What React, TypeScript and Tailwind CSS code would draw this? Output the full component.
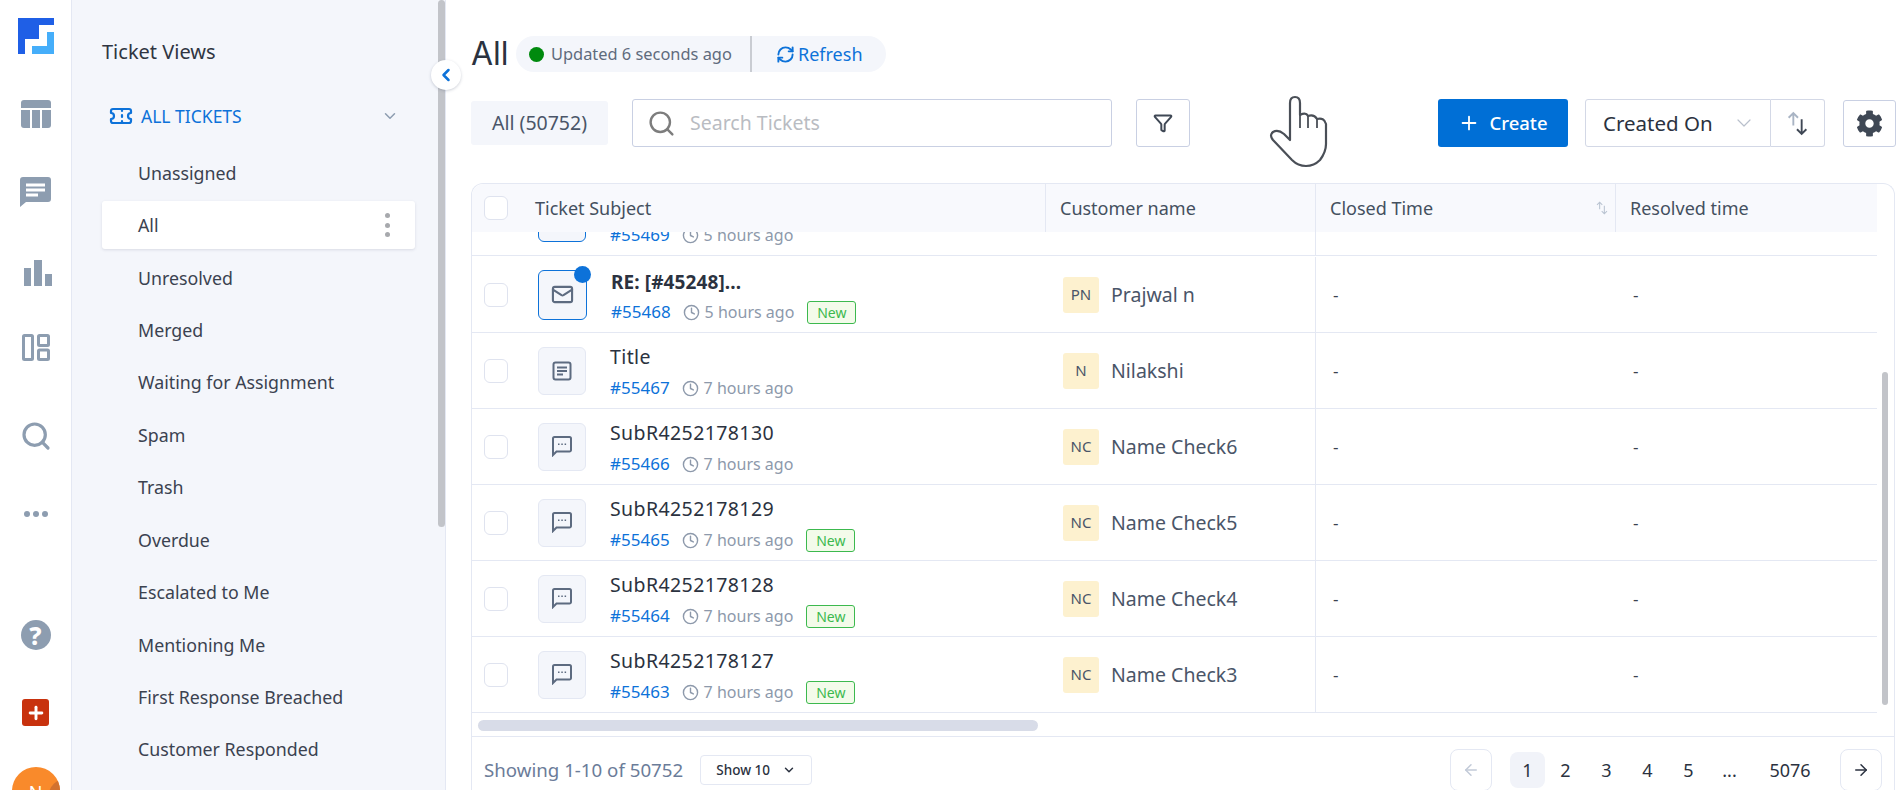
import { ArrowLeft, ArrowRight, ChevronDown, ChevronLeft, Clock, Funnel, Mail, Plus, RefreshCw, Search, Ticket } from "lucide-react";
import { FaCog } from "react-icons/fa";

interface Row {
  id: string;
  title: string;
  age: string;
  isNew?: boolean;
  initials: string;
  name: string;
  kind: "chat" | "doc" | "mail";
}

const views = [
  "Unassigned",
  "All",
  "Unresolved",
  "Merged",
  "Waiting for Assignment",
  "Spam",
  "Trash",
  "Overdue",
  "Escalated to Me",
  "Mentioning Me",
  "First Response Breached",
  "Customer Responded",
];

const rows: Row[] = [
  { id: "#55468", title: "RE: [#45248]...", age: "5 hours ago", isNew: true, initials: "PN", name: "Prajwal n", kind: "mail" },
  { id: "#55467", title: "Title", age: "7 hours ago", initials: "N", name: "Nilakshi", kind: "doc" },
  { id: "#55466", title: "SubR4252178130", age: "7 hours ago", initials: "NC", name: "Name Check6", kind: "chat" },
  { id: "#55465", title: "SubR4252178129", age: "7 hours ago", isNew: true, initials: "NC", name: "Name Check5", kind: "chat" },
  { id: "#55464", title: "SubR4252178128", age: "7 hours ago", isNew: true, initials: "NC", name: "Name Check4", kind: "chat" },
  { id: "#55463", title: "SubR4252178127", age: "7 hours ago", isNew: true, initials: "NC", name: "Name Check3", kind: "chat" },
];

function Logo() {
  return (
    <svg className="shrink-0" width="36" height="36" viewBox="0 0 36 36">
      <path d="M0 0H36V7H21V21H7V36H0Z" fill="#1f5fe6" />
      <path d="M29 14H36V36H14V28H29Z" fill="#45aefa" />
    </svg>
  );
}

function RailIcons() {
  const c = "#8d9db0";
  return (
    <div className="w-[71px] h-[790px] shrink-0 bg-white flex flex-col items-center pt-[18px]">
      <Logo />
      <svg className="mt-[46px] shrink-0" width="30" height="29" viewBox="0 0 30 29" fill={c}>
        <path d="M3 0H27A3 3 0 0 1 30 3V8H0V3A3 3 0 0 1 3 0Z" />
        <path d="M0 10H9V28H3A3 3 0 0 1 0 25Z" />
        <rect x="11" y="10" width="8" height="18" />
        <path d="M21 10H30V25A3 3 0 0 1 27 28H21Z" />
      </svg>
      <svg className="mt-[48px] shrink-0" width="31" height="30" viewBox="0 0 31 30">
        <path d="M3 0H28A3 3 0 0 1 31 3V22A3 3 0 0 1 28 25H6L0 30V3A3 3 0 0 1 3 0Z" fill={c} />
        <path d="M6 6.500H25V9.500H6ZM6 11.500H25V14.500H6ZM6 16.500H18V19.500H6Z" fill="white" />
      </svg>
      <svg className="mt-[53px] ml-[4px] shrink-0" width="28" height="26" viewBox="0 0 28 26" fill={c}>
        <rect x="0" y="8" width="7" height="18" />
        <rect x="10" y="0" width="8" height="26" />
        <rect x="21" y="14" width="7" height="12" />
      </svg>
      <svg className="mt-[48px] shrink-0" width="28" height="27" viewBox="0 0 28 27" fill="none" stroke={c} strokeWidth="3">
        <rect x="1.500" y="1.500" width="9" height="24" rx="1" />
        <rect x="16.500" y="1.500" width="10" height="10" rx="1" />
        <rect x="16.500" y="16" width="10" height="9.500" rx="1" />
      </svg>
      <Search className="mt-[59px] shrink-0" size={32} color={c} strokeWidth={2.400} />
      <div className="mt-[59px] shrink-0 flex gap-[3px]">
        <span className="size-[6px] rounded-full bg-[#8d9db0]" />
        <span className="size-[6px] rounded-full bg-[#8d9db0]" />
        <span className="size-[6px] rounded-full bg-[#8d9db0]" />
      </div>
      <div className="mt-[103px] size-[30px] shrink-0 rounded-full bg-[#8d9db0] text-white text-[25px] font-extrabold flex items-center justify-center leading-none">?</div>
      <div className="mt-[49px] size-[27px] shrink-0 rounded-[3px] bg-[#c8320e] flex items-center justify-center">
        <Plus size={20} color="white" strokeWidth={3.500} />
      </div>
      <div className="relative overflow-hidden mt-[41px] size-[48px] shrink-0 rounded-full bg-[#f98a2b] text-white text-[18px] flex justify-center pt-[12px]">
        <span className="absolute left-[36px] top-[11px] size-[40px] rounded-full bg-[#d2722f]" />
        <span className="relative">N</span>
      </div>
    </div>
  );
}

function Sidebar() {
  return (
    <div className="relative w-[375px] h-[790px] shrink-0 bg-[#f4f6fb] border-l border-r border-[#e4e8f3]">
      <div className="pl-[30px] pt-[38px] text-[20px] leading-[28px] text-[#2f3542]">Ticket Views</div>
      <div className="mt-[38px] h-[24px] pl-[37px] pr-[46px] flex items-center text-[#0d72d9]">
        <Ticket size={24} strokeWidth={2.200} />
        <span className="ml-[8px] text-[17.500px] flex-1">ALL TICKETS</span>
        <ChevronDown size={18} color="#8d9db0" />
      </div>
      <div className="mt-[21px] w-[313px] ml-[30px] flex flex-col gap-[4.450px]">
        {views.map((v) => (
          <div
            key={v}
            className={
              v === "All"
                ? "h-[48px] pl-[36px] pr-[25px] flex items-center justify-between text-[17.800px] text-[#3b4250] bg-white rounded-[3px] shadow-[0_1px_3px_rgba(60,70,100,0.15)]"
                : "h-[48px] pl-[36px] flex items-center text-[17.800px] text-[#3b4250]"
            }
          >
            {v}
            {v === "All" && (
              <span className="flex flex-col gap-[4.500px]">
                <span className="size-[5px] rounded-full bg-[#a7a9ad]" />
                <span className="size-[5px] rounded-full bg-[#a7a9ad]" />
                <span className="size-[5px] rounded-full bg-[#a7a9ad]" />
              </span>
            )}
          </div>
        ))}
      </div>
      <div className="absolute top-0 left-[366px] w-[7px] h-[527px] rounded-full bg-[#c2c4c9]" />
      <div className="absolute top-[60px] left-[359px] size-[30px] rounded-full bg-white shadow-[0_1px_3px_rgba(60,70,100,0.25)] flex items-center justify-center">
        <ChevronLeft size={20} color="#0d72d9" strokeWidth={3} />
      </div>
    </div>
  );
}

function SortArrows({ size, up, down }: { size: number; up: string; down: string }) {
  return (
    <svg width={size} height={size} viewBox="0 0 24 24" fill="none" strokeWidth="1.800">
      <path d="M8 14V2M3.500 6.500L8 2L12.500 6.500" stroke={up} />
      <path d="M16 8V22M11.500 17.500L16 22L20.500 17.500" stroke={down} />
    </svg>
  );
}

function KindIcon({ kind }: { kind: Row["kind"] }) {
  if (kind === "mail") return <Mail size={23} color="#5d6b80" strokeWidth={2.200} />;
  if (kind === "doc") {
    return (
      <svg width="20" height="20" viewBox="0 0 20 20" fill="none" stroke="#5d6b80" strokeWidth="2">
        <rect x="1.500" y="1.500" width="17" height="17" rx="2" />
        <path d="M5 6.500H15M5 10H15M5 13.500H11" />
      </svg>
    );
  }
  return (
    <svg width="20" height="21" viewBox="0 0 20 21">
      <path d="M1 2.500A1.500 1.500 0 0 1 2.500 1H17.500A1.500 1.500 0 0 1 19 2.500V14A1.500 1.500 0 0 1 17.500 15.500H4.500L1 19Z" fill="none" stroke="#5d6b80" strokeWidth="2" />
      <path d="M6 7.500H7.500V9H6ZM9.300 7.500H10.800V9H9.300ZM12.600 7.500H14.100V9H12.600Z" fill="#5d6b80" />
    </svg>
  );
}

function TicketRow({ row, first }: { row: Row | null; first?: boolean }) {
  const r: Row = row ?? { id: "#55469", title: "", age: "5 hours ago", initials: "", name: "", kind: "chat" };
  return (
    <div className="h-[76px] flex border-b border-[#e4e8f3]">
      <div className="w-[573px] pl-[12px] flex items-center shrink-0">
        <span className="size-[24px] rounded-[6px] border border-[#dfe3ef] bg-white shrink-0" />
        <div
          className={
            first
              ? "relative ml-[30px] w-[49px] h-[50px] rounded-[6px] border border-[#0d72d9] bg-[#f4f6fb] flex items-center justify-center shrink-0"
              : row
                ? "relative ml-[30px] size-[48px] rounded-[6px] border border-[#e4e8f3] bg-[#f4f6fb] flex items-center justify-center shrink-0"
                : "relative ml-[30px] size-[48px] rounded-[6px] border border-[#0d72d9] bg-[#f4f6fb] shrink-0"
          }
        >
          {row && <KindIcon kind={r.kind} />}
          {first && <span className="absolute -top-[5px] -right-[5px] size-[17px] rounded-full bg-[#0d72d9]" />}
        </div>
        <div className={first ? "ml-[24px] self-start pt-[13px]" : "ml-[24px] self-start pt-[12px]"}>
          <div className={first ? "h-[24px] leading-[24px] text-[19px] tracking-[0.100px] font-bold text-[#2b3240]" : "h-[24px] leading-[24px] text-[19.500px] tracking-[0.400px] text-[#2b3240]"}>{r.title}</div>
          <div className={first ? "mt-[6px] h-[24px] flex items-center" : "mt-[7px] h-[24px] flex items-center"}>
            <span className="text-[17px] text-[#0d72d9]">{r.id}</span>
            <Clock className="ml-[12px]" size={17} color="#8d99ab" />
            <span className="ml-[5px] text-[16px] text-[#8d99ab]">{r.age}</span>
            {r.isNew && (
              <span className="ml-[13px] w-[49px] h-[23px] rounded-[3px] border border-[#3cb94e] bg-[#f3fbea] text-[14px] text-[#3cb94e] flex items-center justify-center">New</span>
            )}
          </div>
        </div>
      </div>
      <div className="w-[270px] shrink-0 pl-[18px] flex items-center">
        {row && (
          <>
            <span className="size-[36px] rounded-[3px] bg-[#fdf1cf] text-[15px] text-[#4a5568] flex items-center justify-center">{r.initials}</span>
            <span className="ml-[12px] text-[19.500px] text-[#4a5568]">{r.name}</span>
          </>
        )}
      </div>
      <div className="w-[300px] shrink-0 pl-[17px] flex items-center border-l border-[#e4e8f3] text-[17px] text-[#3b4250]">{row && "-"}</div>
      <div className="flex-1 pl-[18px] flex items-center text-[17px] text-[#3b4250]">{row && "-"}</div>
    </div>
  );
}

export default function App() {
  return (
    <div className="relative w-[1900px] h-[790px] overflow-hidden flex bg-white font-['Noto_Sans',sans-serif]">
      <RailIcons />
      <Sidebar />
      <div className="flex-1 min-w-0 pl-[25px] pr-[4px] pt-[36px]">
        <div className="h-[36px] flex items-center">
          <span className="w-[35px] text-[32px] text-[#2b3240] font-['Inter',sans-serif]">All</span>
          <div className="ml-[10px] h-[36px] w-[370px] rounded-full bg-[#f4f6fb] flex items-center text-[16.400px]">
            <span className="ml-[13px] size-[15px] rounded-full bg-[#008a0e]" />
            <span className="ml-[7px] w-[199px] text-[#5f6b7d]">Updated 6 seconds ago</span>
            <span className="w-[2px] h-[36px] bg-[#c9ccd2]" />
            <RefreshCw className="ml-[24px]" size={19} color="#0d72d9" strokeWidth={2.400} />
            <span className="ml-[3px] text-[18px] text-[#0d72d9]">Refresh</span>
          </div>
        </div>
        <div className="mt-[27px] h-[48px] flex items-center">
          <div className="w-[137px] h-[44px] rounded-[3px] bg-[#f4f6fb] text-[19.500px] text-[#4a5568] flex items-center justify-center">All (50752)</div>
          <div className="ml-[24px] w-[480px] h-[48px] rounded-[3px] border border-[#c9d0e3] flex items-center pl-[14px]">
            <Search size={29} color="#7d7d7d" strokeWidth={2} />
            <span className="ml-[14px] text-[19.500px] text-[#b9bcc2]">Search Tickets</span>
          </div>
          <div className="ml-[24px] w-[54px] h-[48px] rounded-[3px] border border-[#c9d0e3] flex items-center justify-center">
            <Funnel size={20} color="#3f4855" strokeWidth={2.400} />
          </div>
          <div className="ml-[248px] w-[130px] h-[48px] rounded-[3px] bg-[#006fd6] text-white text-[18.500px] font-medium flex items-center justify-center gap-[9px]">
            <Plus size={22} strokeWidth={2} />
            Create
          </div>
          <div className="ml-[17px] w-[186px] h-[48px] rounded-l-[3px] border border-[#d3d8e6] flex items-center pl-[17px] pr-[14px] justify-between text-[20.500px] text-[#2b3240]">
            Created On
            <ChevronDown size={24} color="#b9c0cc" strokeWidth={1.200} />
          </div>
          <div className="w-[54px] h-[48px] rounded-r-[3px] border border-l-0 border-[#d3d8e6] flex items-center justify-center">
            <SortArrows size={25} up="#a9b4c4" down="#3f4855" />
          </div>
          <div className="ml-[18px] w-[53px] h-[47px] rounded-[3px] border border-[#c9d0e3] flex items-center justify-center">
            <FaCog size={27} color="#3f4855" />
          </div>
        </div>
        <div className="mt-[36px] mr-[1px] border border-b-0 border-[#e4e8f3] rounded-t-[12px] pr-[17px] relative">
          <div className="h-[48px] flex items-center bg-[#f8f9fd] rounded-tl-[12px] text-[18px] text-[#44505f]">
            <div className="w-[573px] shrink-0 pl-[12px] flex items-center">
              <span className="size-[24px] rounded-[6px] border border-[#dfe3ef] bg-white" />
              <span className="ml-[27px]">Ticket Subject</span>
            </div>
            <div className="w-[270px] shrink-0 h-full pl-[14px] flex items-center border-l border-[#e4e8f3]">Customer name</div>
            <div className="w-[300px] shrink-0 h-full pl-[14px] pr-[6px] flex items-center justify-between border-l border-[#e4e8f3]">
              Closed Time
              <SortArrows size={14} up="#b9c3d1" down="#b9c3d1" />
            </div>
            <div className="flex-1 h-full pl-[14px] flex items-center border-l border-[#e4e8f3]">Resolved time</div>
          </div>
          <div className="h-[25px] overflow-hidden">
            <div className="-mt-[52px]">
              <TicketRow row={null} />
            </div>
          </div>
          {rows.map((r, i) => (
            <TicketRow key={r.id} row={r} first={i === 0} />
          ))}
          <div className="h-[23px] pt-[7px] pl-[6px]">
            <div className="w-[560px] h-[11px] rounded-full bg-[#d8dce8]" />
          </div>
          <div className="absolute top-[188px] right-[6px] w-[6px] h-[333px] rounded-full bg-[#c2c4c9]" />
        </div>
        <div className="mr-[1px] h-[60px] border border-b-0 border-[#e4e8f3] flex pl-[12px] pr-[12px] pt-[12px] items-start">
          <span className="h-[44px] leading-[44px] -mt-[1px] text-[18.700px] text-[#6b7c99]">Showing 1-10 of 50752</span>
          <div className="ml-[17px] w-[112px] h-[30px] mt-[6px] rounded-[4px] border border-[#e4e8f3] flex items-center justify-center gap-[12px] text-[13.500px] font-medium text-[#2b3240]">
            Show 10
            <ChevronDown size={14} strokeWidth={2.500} />
          </div>
          <div className="ml-auto w-[42px] h-[42px] rounded-[8px] border border-[#e4e8f3] flex items-center justify-center">
            <ArrowLeft size={18} color="#c2cad8" />
          </div>
          <div className="ml-[18px] w-[35px] h-[36px] mt-[3px] rounded-[8px] bg-[#f1f3f9] flex items-center justify-center text-[18px] text-[#2b3240]">1</div>
          {["2", "3", "4", "5", "..."].map((p) => (
            <div key={p} className="w-[41px] h-[36px] mt-[3px] flex items-center justify-center text-[18px] text-[#2b3240]">{p}</div>
          ))}
          <div className="ml-[10px] w-[60px] h-[36px] mt-[3px] flex items-center justify-center text-[18px] text-[#2b3240]">5076</div>
          <div className="ml-[20px] w-[42px] h-[42px] rounded-[8px] border border-[#e4e8f3] flex items-center justify-center">
            <ArrowRight size={18} color="#2b3240" />
          </div>
        </div>
      </div>
      <svg className="absolute left-[1260px] top-[90px]" width="80" height="80" viewBox="0 0 80 80" fill="#ffffff" stroke="#4a4f57" strokeWidth="2.200" strokeLinejoin="round">
        <path d="M30 50L30 13Q30 7 35 7Q40 7 40 13L40 25Q46 22 48 26Q54 24 57 29Q64 27 66 34L66 54Q66 62 60 70Q54 76 46 76Q38 76 32 70L13 50Q9 45 13 42Q18 39 24 44Z" />
        <path d="M40 25V38M48 26V38M57 29V38" fill="none" strokeWidth="1.800" />
      </svg>
    </div>
  );
}
